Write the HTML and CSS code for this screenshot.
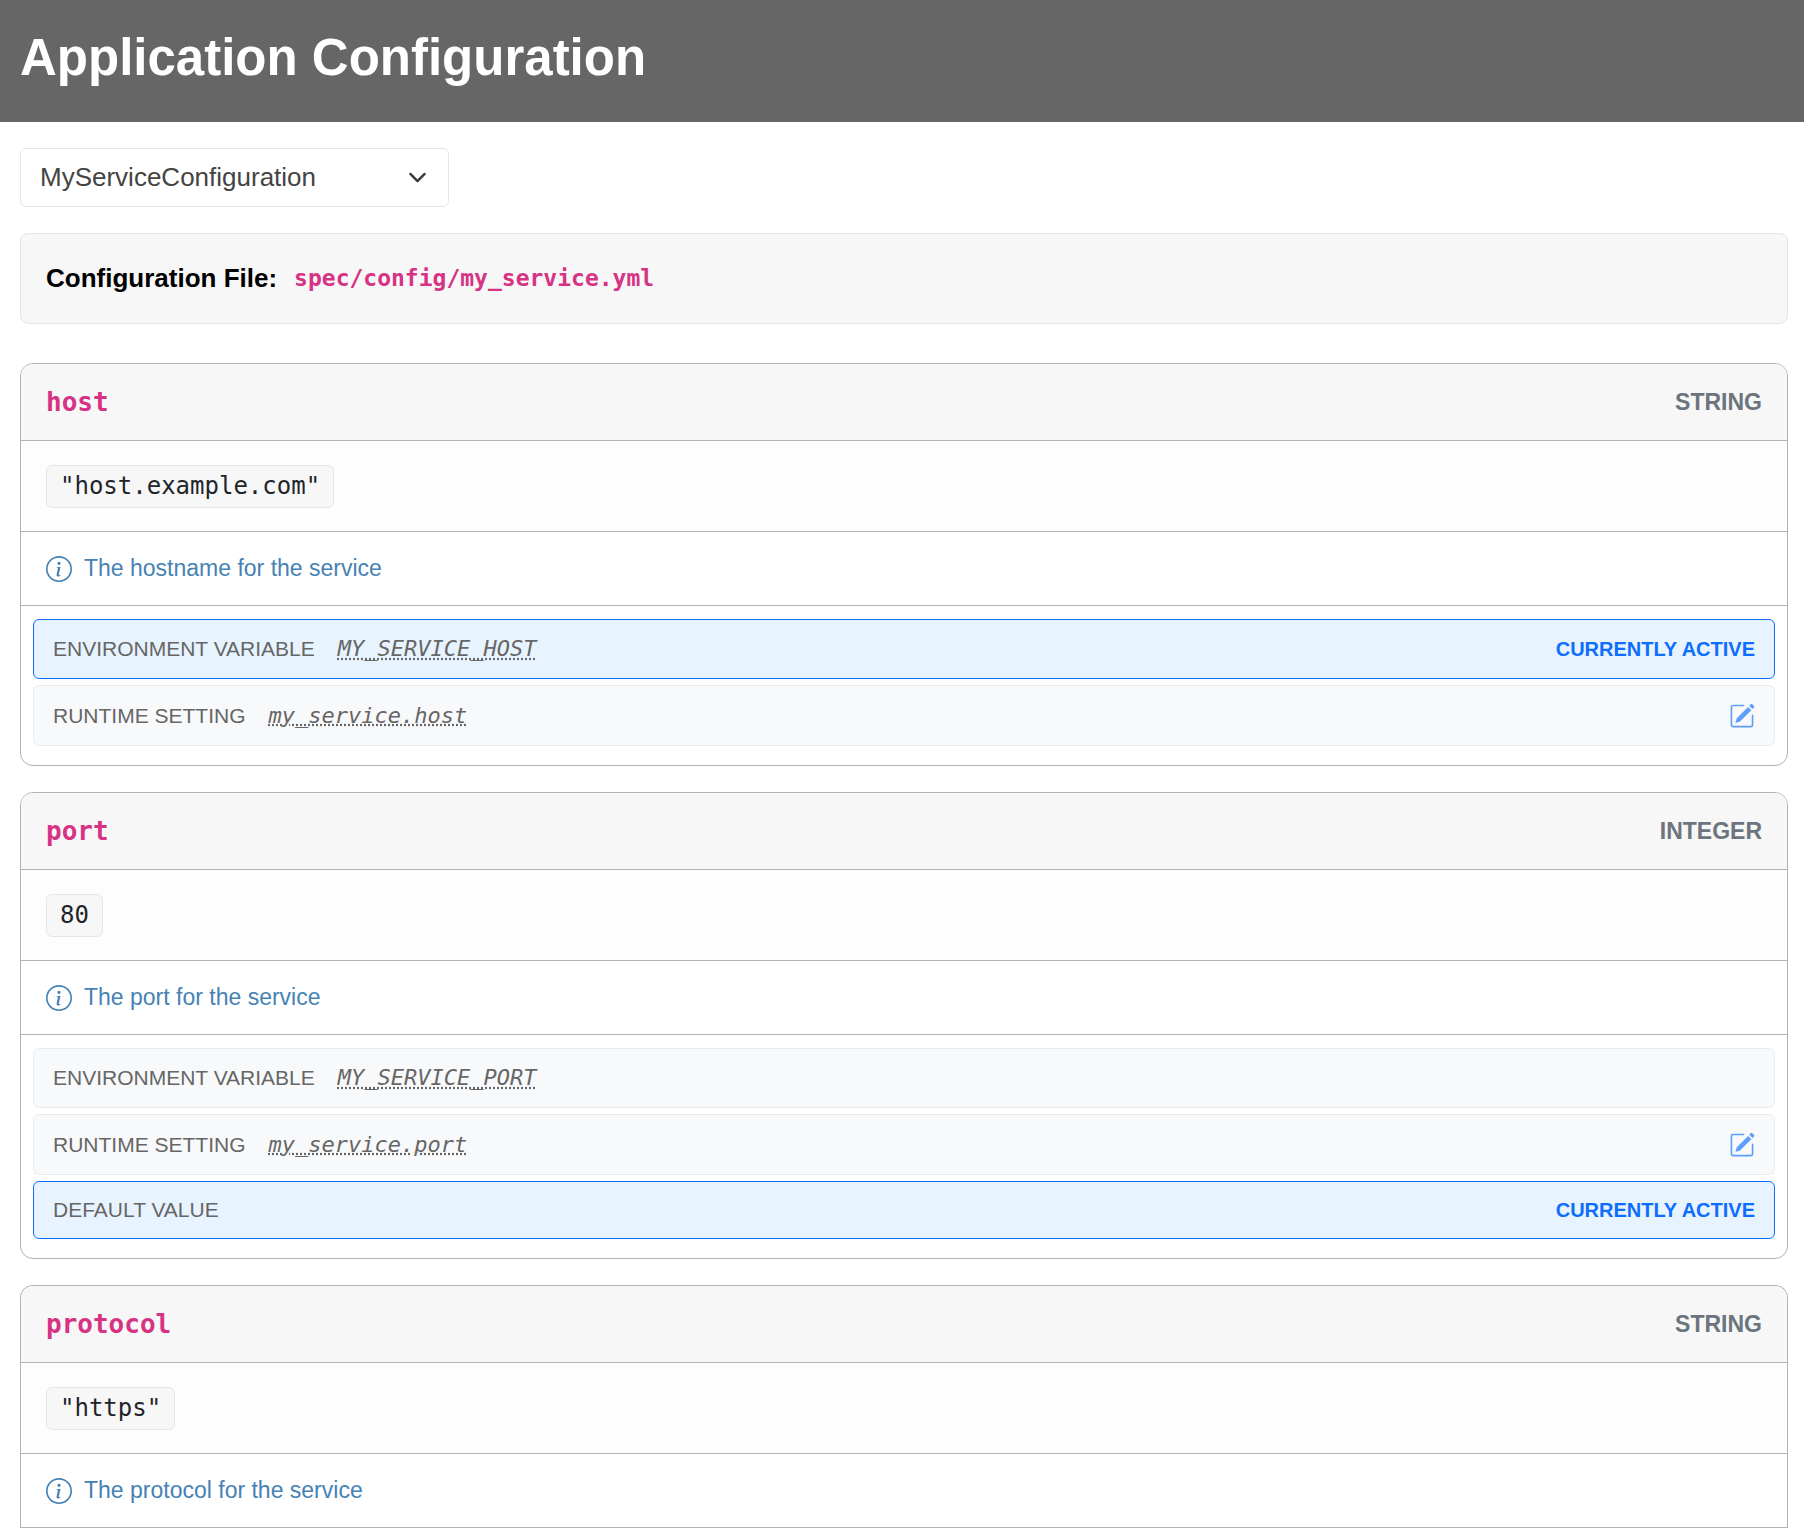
FILE: index.html
```html
<!DOCTYPE html>
<html lang="en">
<head>
  <meta charset="utf-8">
  <meta name="viewport" content="width=device-width, initial-scale=1">
  <title>Application Configuration</title>
  <link rel="stylesheet" href="styles.css">
</head>
<body>
  <svg class="sprite" aria-hidden="true">
    <symbol id="icon-info" viewBox="0 0 16 16">
      <path d="M8 15A7 7 0 1 1 8 1a7 7 0 0 1 0 14m0 1A8 8 0 1 0 8 0a8 8 0 0 0 0 16"/>
      <path d="m8.930 6.588-2.290.287-.082.380.450.083c.294.070.352.176.288.469l-.738 3.468c-.194.897.105 1.319.808 1.319.545 0 1.178-.252 1.465-.598l.088-.416c-.200.176-.492.246-.686.246-.275 0-.375-.193-.304-.533zM9 4.500a1 1 0 1 1-2 0 1 1 0 0 1 2 0"/>
    </symbol>
    <symbol id="icon-edit" viewBox="0 0 16 16">
      <path d="M15.502 1.940a.5.5 0 0 1 0 .706L14.459 3.690l-2-2L13.502.646a.5.5 0 0 1 .707 0l1.293 1.293zm-1.750 2.456-2-2L4.939 9.210a.5.5 0 0 0-.121.196l-.805 2.414a.25.25 0 0 0 .316.316l2.414-.805a.5.5 0 0 0 .196-.120z"/>
      <path fill-rule="evenodd" d="M1 13.500A1.500 1.500 0 0 0 2.500 15h11a1.500 1.500 0 0 0 1.500-1.500v-6a.5.5 0 0 0-1 0v6a.5.5 0 0 1-.5.5h-11a.5.5 0 0 1-.5-.5v-11a.5.5 0 0 1 .5-.5H9a.5.5 0 0 0 0-1H2.500A1.500 1.500 0 0 0 1 2.500z"/>
    </symbol>
  </svg>

  <header class="page-header">
    <h1 class="page-title">Application Configuration</h1>
  </header>

  <main class="content">
    <div class="picker">
      <select class="picker-select" aria-label="Configuration">
        <option>MyServiceConfiguration</option>
      </select>
      <svg class="picker-chevron" viewBox="0 0 16 16" aria-hidden="true"><path d="m2 5 6 6 6-6"/></svg>
    </div>

    <div class="config-file">
      <strong>Configuration File:</strong>
      <code class="config-path">spec/config/my_service.yml</code>
    </div>

    <div class="fields">
      <section class="field">
        <div class="field-header">
          <h2 class="field-name">host</h2>
          <span class="field-type">STRING</span>
        </div>
        <div class="field-value"><code class="value">"host.example.com"</code></div>
        <div class="field-description">
          <svg class="icon-info" aria-hidden="true"><use href="#icon-info"/></svg>
          <span>The hostname for the service</span>
        </div>
        <ul class="sources">
          <li class="source source-active">
            <span class="source-label">ENVIRONMENT VARIABLE</span>
            <code class="source-key">MY_SERVICE_HOST</code>
            <strong class="source-status">CURRENTLY ACTIVE</strong>
          </li>
          <li class="source">
            <span class="source-label">RUNTIME SETTING</span>
            <code class="source-key">my_service.host</code>
            <a class="source-edit" href="#" aria-label="Edit"><svg class="icon-edit" aria-hidden="true"><use href="#icon-edit"/></svg></a>
          </li>
        </ul>
      </section>

      <section class="field">
        <div class="field-header">
          <h2 class="field-name">port</h2>
          <span class="field-type">INTEGER</span>
        </div>
        <div class="field-value"><code class="value">80</code></div>
        <div class="field-description">
          <svg class="icon-info" aria-hidden="true"><use href="#icon-info"/></svg>
          <span>The port for the service</span>
        </div>
        <ul class="sources">
          <li class="source">
            <span class="source-label">ENVIRONMENT VARIABLE</span>
            <code class="source-key">MY_SERVICE_PORT</code>
          </li>
          <li class="source">
            <span class="source-label">RUNTIME SETTING</span>
            <code class="source-key">my_service.port</code>
            <a class="source-edit" href="#" aria-label="Edit"><svg class="icon-edit" aria-hidden="true"><use href="#icon-edit"/></svg></a>
          </li>
          <li class="source source-active">
            <span class="source-label">DEFAULT VALUE</span>
            <strong class="source-status">CURRENTLY ACTIVE</strong>
          </li>
        </ul>
      </section>

      <section class="field field-open">
        <div class="field-header">
          <h2 class="field-name">protocol</h2>
          <span class="field-type">STRING</span>
        </div>
        <div class="field-value"><code class="value">"https"</code></div>
        <div class="field-description">
          <svg class="icon-info" aria-hidden="true"><use href="#icon-info"/></svg>
          <span>The protocol for the service</span>
        </div>
      </section>
    </div>
  </main>
</body>
</html>
```

FILE: styles.css
```css
:root {
  --line: #b3b3b3;
  --line-soft: #e6e6e6;
  --panel: #f7f7f7;
  --accent: #0d6efd;
  --name: #d63384;
  --mono: "DejaVu Sans Mono", monospace;
}

* {
  box-sizing: border-box;
}

body {
  margin: 0;
  background: #fff;
  color: #000;
  font-family: "Liberation Sans", Arial, sans-serif;
  font-size: 26px;
}

code {
  font-family: var(--mono);
}

.sprite {
  display: none;
}

/* Page header */

.page-header {
  padding: 25px 20px 31px;
  background: #666;
}

.page-title {
  margin: 0;
  color: #fff;
  font-size: 51px;
  line-height: 66px;
}

.content {
  padding: 26px 16px 0 20px;
}

/* Configuration picker */

.picker {
  position: relative;
  width: 429px;
  max-width: 100%;
  margin-bottom: 26px;
}

.picker-select {
  display: block;
  width: 100%;
  height: 59px;
  padding: 0 56px 2px 19px;
  appearance: none;
  border: 1px solid var(--line-soft);
  border-radius: 6px;
  background: #fff;
  color: #444;
  font: inherit;
}

.picker-chevron {
  position: absolute;
  top: 20px;
  right: 22px;
  width: 19px;
  height: 19px;
  fill: none;
  stroke: #343a40;
  stroke-width: 2;
  stroke-linecap: round;
  stroke-linejoin: round;
  pointer-events: none;
}

/* Configuration file */

.config-file {
  display: flex;
  align-items: center;
  gap: 17px;
  margin-bottom: 39px;
  padding: 28px 25px;
  border: 1px solid var(--line-soft);
  border-radius: 8px;
  background: var(--panel);
  line-height: 33px;
}

.config-path {
  color: var(--name);
  font-size: 23px;
  font-weight: 700;
}

/* Fields */

.fields {
  display: flex;
  flex-direction: column;
  gap: 26px;
}

.field {
  overflow: hidden;
  border: 1px solid var(--line);
  border-radius: 13px;
}

.field-open {
  border-bottom: 0;
  border-radius: 13px 13px 0 0;
}

.field-header {
  display: flex;
  align-items: center;
  justify-content: space-between;
  padding: 20px 25px;
  border-bottom: 1px solid var(--line);
  background: var(--panel);
  line-height: 36px;
}

.field-name {
  margin: 0;
  color: var(--name);
  font-family: var(--mono);
  font-size: 26px;
}

.field-type {
  color: #6c757d;
  font-size: 23px;
  font-weight: 700;
}

.field-value {
  display: flex;
  padding: 24px 25px 23px;
  border-bottom: 1px solid var(--line);
  background: #fdfdfd;
}

.value {
  padding: 0 13px;
  border: 1px solid var(--line-soft);
  border-radius: 6px;
  background: var(--panel);
  color: #212529;
  font-size: 24px;
  line-height: 41px;
}

.field-description {
  display: flex;
  align-items: center;
  gap: 12px;
  padding: 20px 25px;
  border-bottom: 1px solid var(--line);
  color: #4682b4;
  font-size: 23px;
  line-height: 33px;
}

.icon-info {
  width: 26px;
  height: 26px;
  fill: currentColor;
}

/* Value sources */

.sources {
  display: flex;
  flex-direction: column;
  gap: 6px;
  margin: 0;
  padding: 13px 12px 19px;
  list-style: none;
}

.source {
  display: flex;
  align-items: center;
  padding: 12px 19px;
  border: 1px solid #e9ecef;
  border-radius: 6px;
  background: #f8f9fb;
  color: #666;
}

.source-active {
  border-color: var(--accent);
  background: #e7f3ff;
}

.source-label {
  margin-right: 23px;
  font-size: 21px;
  line-height: 32px;
}

.source-key {
  font-size: 22px;
  font-style: italic;
  line-height: 34px;
  text-decoration: underline dotted;
}

.source-status {
  margin-left: auto;
  color: var(--accent);
  font-size: 20px;
}

.source-edit {
  display: flex;
  align-items: center;
  height: 35px;
  margin-left: auto;
  color: var(--accent);
  opacity: 0.65;
}

.icon-edit {
  width: 26px;
  height: 26px;
  fill: currentColor;
}
```
